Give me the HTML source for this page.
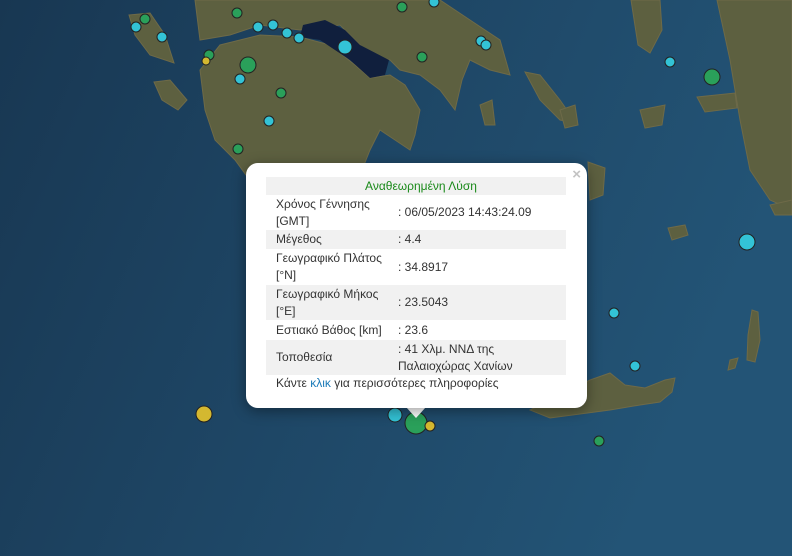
<!DOCTYPE html>
<html><head><meta charset="utf-8"><style>
body{margin:0;width:792px;height:556px;overflow:hidden;background:#1d3f5e;font-family:"Liberation Sans","Noto Sans CJK SC",sans-serif}
svg{position:absolute;left:0;top:0}
.pop{position:absolute;left:246px;top:163px;width:341px;height:245px;background:#fff;border-radius:12px;box-shadow:0 3px 14px rgba(0,0,0,.4)}
.tip{position:absolute;left:406px;top:407px;width:0;height:0;border-left:10px solid transparent;border-right:10px solid transparent;border-top:11px solid #fff}
.x{position:absolute;right:6px;top:3px;color:#c3c3c3;font:bold 15px "Liberation Sans",sans-serif}
table{position:absolute;left:20px;top:14px;width:300px;border-collapse:collapse;font-size:12px;color:#333}
td{padding:0 0 0 10px;line-height:17px;vertical-align:middle}
tr.g td{background:#f1f1f1}
.h td{text-align:center;color:#1a8a1a;height:18px}
.f{position:absolute;left:30px;top:213px;font-size:12px;color:#333}
.f span{color:#1a7ab8}
</style></head><body>
<svg width="792" height="556" viewBox="0 0 792 556">
<defs><linearGradient id="s" x1="0" y1="0" x2="1" y2="0.3"><stop offset="0" stop-color="#183752"/><stop offset="0.5" stop-color="#1e4665"/><stop offset="1" stop-color="#235476"/></linearGradient></defs>
<rect width="792" height="556" fill="url(#s)"/>
<g fill="#5d6040" stroke="#6e6a48" stroke-width="1">
<path d="M195 0 L440 0 L470 20 L500 40 L510 75 L490 70 L470 60 L462 80 L455 110 L440 90 L420 75 L400 70 L390 60 L370 55 L340 25 L300 30 L260 25 L230 35 L200 40 Z"/>
<path d="M200 70 L220 45 L260 35 L300 37 L330 45 L355 65 L370 78 L390 75 L405 85 L420 110 L415 135 L410 150 L395 140 L380 130 L370 150 L360 175 L300 180 L246 175 L235 160 L215 140 L205 110 Z"/>
<path d="M129 15 L150 13 L165 35 L174 63 L150 55 L135 35 Z"/>
<path d="M154 82 L170 80 L187 100 L178 110 L162 100 Z"/>
<path d="M631 0 L660 0 L662 30 L650 53 L638 45 Z"/>
<path d="M525 72 L540 75 L560 100 L576 123 L560 120 L540 100 Z"/>
<path d="M697 97 L735 93 L737 108 L705 112 Z"/>
<path d="M640 110 L665 105 L662 125 L645 128 Z"/>
<path d="M717 0 L792 0 L792 210 L770 200 L750 170 L740 120 L730 60 Z"/>
<path d="M588 162 L605 168 L603 195 L590 200 Z"/>
<path d="M480 105 L492 100 L495 125 L485 125 Z"/>
<path d="M560 110 L575 105 L578 125 L565 128 Z"/>
<path d="M530 410 L560 395 L590 380 L610 373 L625 385 L645 388 L665 380 L675 378 L672 392 L660 402 L640 405 L610 410 L580 414 L550 418 Z"/>
<path d="M752 310 L758 312 L760 340 L755 362 L747 360 L748 335 Z"/>
<path d="M730 360 L738 358 L735 368 L728 370 Z"/>
<path d="M668 228 L685 225 L688 235 L672 240 Z"/>
<path d="M770 205 L792 200 L792 215 L775 215 Z"/>
</g>
<path d="M303 25 L325 20 L345 30 L360 45 L389 60 L385 75 L370 78 L350 60 L320 40 L300 37 Z" fill="#101f3d"/>
<g stroke="#222" stroke-width="1">
<circle cx="136" cy="27" r="5" fill="#33c3d6"/><circle cx="162" cy="37" r="5" fill="#33c3d6"/><circle cx="145" cy="19" r="5" fill="#2aa05a"/>
<circle cx="209" cy="55" r="5" fill="#2aa05a"/><circle cx="206" cy="61" r="4" fill="#d4b830"/><circle cx="248" cy="65" r="8" fill="#2aa05a"/>
<circle cx="237" cy="13" r="5" fill="#2aa05a"/><circle cx="258" cy="27" r="5" fill="#33c3d6"/><circle cx="273" cy="25" r="5" fill="#33c3d6"/>
<circle cx="287" cy="33" r="5" fill="#33c3d6"/><circle cx="299" cy="38" r="5" fill="#33c3d6"/><circle cx="345" cy="47" r="7" fill="#33c3d6"/>
<circle cx="240" cy="79" r="5" fill="#33c3d6"/><circle cx="281" cy="93" r="5" fill="#2aa05a"/><circle cx="269" cy="121" r="5" fill="#33c3d6"/>
<circle cx="238" cy="149" r="5" fill="#2aa05a"/><circle cx="402" cy="7" r="5" fill="#2aa05a"/><circle cx="434" cy="2" r="5" fill="#33c3d6"/>
<circle cx="422" cy="57" r="5" fill="#2aa05a"/><circle cx="481" cy="41" r="5" fill="#33c3d6"/><circle cx="486" cy="45" r="5" fill="#33c3d6"/>
<circle cx="670" cy="62" r="5" fill="#33c3d6"/><circle cx="712" cy="77" r="8" fill="#2aa05a"/>
<circle cx="747" cy="242" r="8" fill="#33c3d6"/><circle cx="614" cy="313" r="5" fill="#33c3d6"/><circle cx="635" cy="366" r="5" fill="#33c3d6"/>
<circle cx="599" cy="441" r="5" fill="#2aa05a"/><circle cx="204" cy="414" r="8" fill="#d4b830"/><circle cx="395" cy="415" r="7" fill="#33c3d6"/>
<circle cx="416" cy="423" r="11" fill="#2aa05a"/><circle cx="430" cy="426" r="5" fill="#d4b830"/>
</g>
</svg>
<div class="tip"></div>
<div class="pop"><div class="x">×</div>
<table>
<tr class="g h"><td colspan="2">Αναθεωρημένη Λύση</td></tr>
<tr><td style="height:35px;width:112px">Χρόνος Γέννησης<br>[GMT]</td><td>: 06/05/2023 14:43:24.09</td></tr>
<tr class="g"><td style="height:19px">Μέγεθος</td><td>: 4.4</td></tr>
<tr><td style="height:36px">Γεωγραφικό Πλάτος<br>[°N]</td><td>: 34.8917</td></tr>
<tr class="g"><td style="height:35px">Γεωγραφικό Μήκος<br>[°E]</td><td>: 23.5043</td></tr>
<tr><td style="height:20px">Εστιακό Βάθος [km]</td><td>: 23.6</td></tr>
<tr class="g"><td style="height:35px">Τοποθεσία</td><td>: 41 Χλμ. ΝΝΔ της<br>Παλαιοχώρας Χανίων</td></tr>
</table>
<div class="f">Κάντε <span>κλικ</span> για περισσότερες πληροφορίες</div>
</div>
</body></html>
